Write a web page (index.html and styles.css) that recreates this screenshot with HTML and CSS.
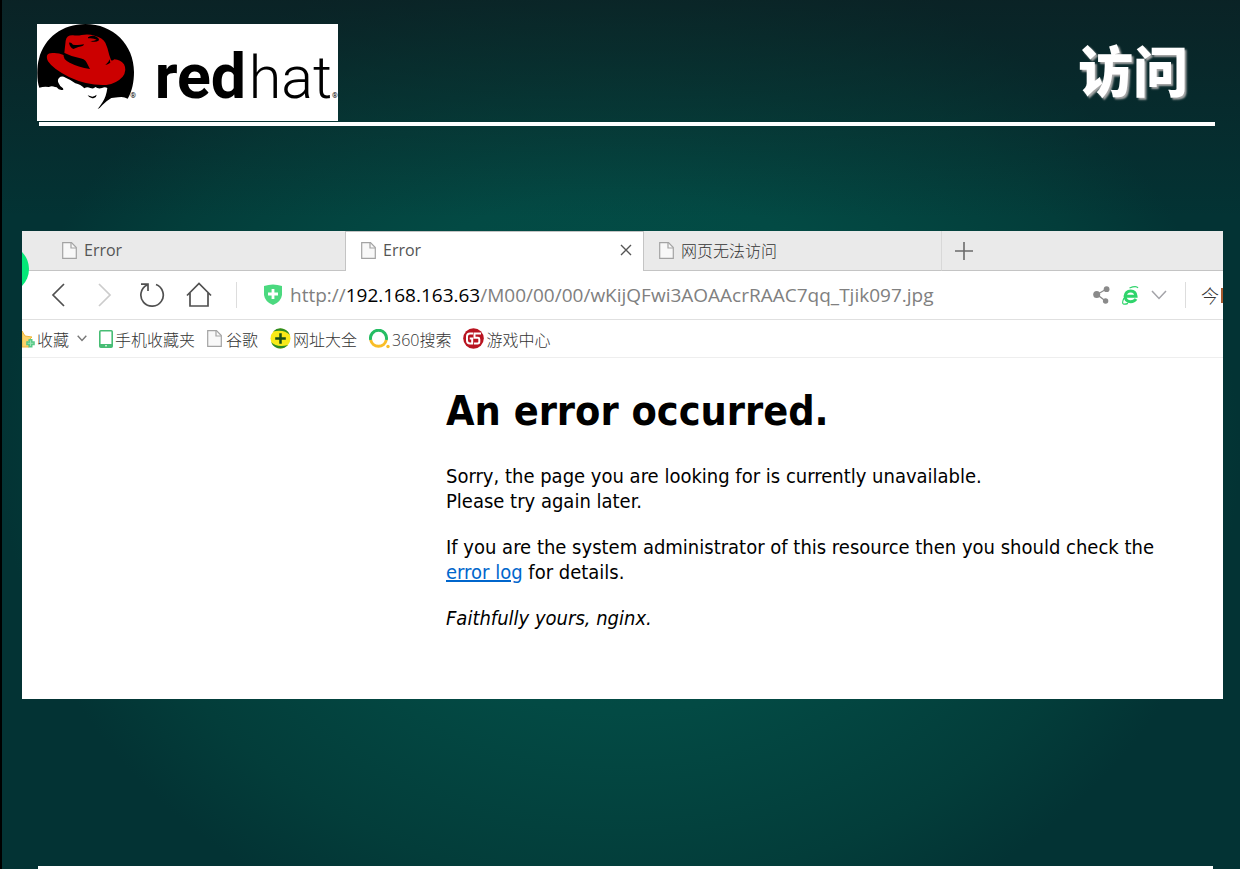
FILE: index.html
```
<!DOCTYPE html>
<html lang="zh-CN">
<head>
    <meta charset="UTF-8">
    <meta name="viewport" content="width=device-width, initial-scale=1.0">
    <title>访问</title>
    <link rel="stylesheet" href="styles.css">
</head>
<body>
<!-- shared icon shapes -->
<svg class="defs" width="0" height="0" aria-hidden="true">
    <symbol id="page" viewBox="0 0 15 17">
        <path d="M.7.7H9.5L14.3 5.5V16.3H.7Z" fill="#f8f8f8" stroke="#a3a3a3" stroke-width="1.2"/>
        <path d="M9 1V6H14" fill="none" stroke="#a3a3a3" stroke-width="1.2"/>
    </symbol>
</svg>

<header class="slide-header">
    <svg class="logo" viewBox="21 18 903 291" role="img" aria-label="redhat">
        <rect x="21" y="18" width="903" height="291" fill="#fff"/>
        <path d="M28 209C20 190 20 145 27 122C43 59 98 18 166 18C250 18 312 81 312 162C312 192 306 221 293 242Q280 234 264 238L244 240Q229 249 218 260Q209 271 203 273Q211 263 218 252Q229 235 232 210Q225 205 216 210Q205 214 196 207Q191 214 181 210Q171 205 163 211Q152 199 136 196Q120 184 107 179Q95 172 87 180Q81 187 86 196Q89 205 99 211L100 215Q87 218 80 208L75 207Q65 202 57 207Q43 204 28 209Z" fill="#000"/>
        <path d="M103 105L107 68Q110 51 129 52Q143 54 155 51Q175 47 194 53Q218 59 226 74Q233 88 238 112L243 126Q246 130 253 124Q272 126 282 139Q292 158 278 176Q260 196 229 201Q174 204 117 177Q69 153 54 130Q43 105 67 105Q83 103 103 112Z" fill="#c00"/>
        <path d="M102 104Q124 115 145 119Q164 122 169 132L180 153Q144 147 119 134Q97 123 101 108Z" fill="#000"/>
        <path d="M117 74Q123 72 129 80Q145 82 162 79Q161 85 145 87L130 93Q119 87 117 74ZM174 58Q181 52 194 54Q208 59 207 67Q197 75 181 69Q190 70 200 65Q190 59 174 61Z" fill="#000"/>
        <path d="M241 134Q233 140 226 141Q237 132 239 124Z" fill="#000"/>
        <path d="M173 232Q180 234 187 236Q194 235 200 230Q199 239 192 240Q179 243 173 232Z" fill="#000"/>
        <text class="logo-bold" x="374" y="240">red</text>
        <text class="logo-light" x="656" y="240">hat</text>
        <text class="logo-mark" x="301" y="241">®</text>
        <text class="logo-mark" x="906" y="241">®</text>
    </svg>
    <h1 class="slide-title">访问</h1>
</header>

<main class="browser">
    <nav class="tabs" aria-label="标签页">
        <span class="account"></span>
        <button class="tab tab-first" type="button"><svg class="page-icon"><use href="#page"/></svg>Error</button>
        <div class="tab tab-active">
            <svg class="page-icon"><use href="#page"/></svg>Error
            <button class="tab-close" type="button" aria-label="关闭"><svg width="12" height="12" viewBox="0 0 12 12"><path d="M1 1L11 11M11 1L1 11" fill="none" stroke="#555" stroke-width="1.4"/></svg></button>
        </div>
        <button class="tab tab-cjk" type="button"><svg class="page-icon"><use href="#page"/></svg>网页无法访问</button>
        <button class="tab-new" type="button" aria-label="新标签页"><svg width="18" height="18" viewBox="0 0 18 18"><path d="M9 0V18M0 9H18" stroke="#6b6b6b" stroke-width="1.6"/></svg></button>
    </nav>

    <div class="toolbar">
        <div class="nav-buttons">
            <button type="button" aria-label="后退"><svg width="14" height="24" viewBox="0 0 14 24"><path d="M13 1L2 12L13 23" fill="none" stroke="#505050" stroke-width="1.7"/></svg></button>
            <button type="button" aria-label="前进"><svg width="14" height="24" viewBox="0 0 14 24"><path d="M1 1L12 12L1 23" fill="none" stroke="#ccc" stroke-width="1.7"/></svg></button>
            <button type="button" aria-label="刷新"><svg width="26" height="26" viewBox="0 0 26 26"><path d="M17 2.5A11.2 11.2 0 1 1 8 3M2 2.2H9V9" fill="none" stroke="#505050" stroke-width="1.7"/></svg></button>
            <button type="button" aria-label="主页"><svg width="26" height="26" viewBox="0 0 26 26"><path d="M1 13.5L13 1.5L25 13.5M4 11V24H22V11" fill="none" stroke="#505050" stroke-width="1.7"/></svg></button>
        </div>
        <svg class="shield" width="20" height="22" viewBox="0 0 20 22"><path d="M1 2Q10-1 19 2V11Q18 18 10 21Q2 18 1 11Z" fill="#4bd97f"/><path d="M10 5V15M5 10H15" stroke="#fff" stroke-width="2.8"/></svg>
        <div class="address" role="textbox" aria-label="地址" contenteditable="true" spellcheck="false">http://<span class="host">192.168.163.63</span>/M00/00/00/wKijQFwi3AOAAcrRAAC7qq_Tjik097.jpg</div>
        <div class="tools">
            <button type="button" aria-label="分享"><svg width="17" height="18" viewBox="0 0 17 18"><path d="M13.5 3L4 8.5L12.5 15" fill="none" stroke="#8a8a8a" stroke-width="1.3"/><circle cx="3.7" cy="8.5" r="3.5" fill="#8a8a8a"/><circle cx="13.6" cy="3.2" r="2.9" fill="#8a8a8a"/><circle cx="12.6" cy="15" r="2.7" fill="#8a8a8a"/></svg></button>
            <button type="button" aria-label="浏览模式"><svg width="17" height="20" viewBox="0 0 17 20"><path d="M3.3 11.2H14Q13.6 6 8.7 6T3.1 11.3Q3.3 16.8 8.7 16.8Q12.2 16.8 14 14" fill="none" stroke="#2fd46b" stroke-width="3"/><path d="M7.5 3Q14.5.2 16 3M2 13Q-.4 18 1.4 19Q3 19.6 6 18.4" fill="none" stroke="#2fd46b" stroke-width="1.2"/></svg></button>
            <button type="button" aria-label="展开"><svg width="16" height="10" viewBox="0 0 16 10"><path d="M1 1L8 8.5L15 1" fill="none" stroke="#a3a3a8" stroke-width="1.5"/></svg></button>
        </div>
        <div class="search"><span>今</span><i class="search-mark"></i></div>
    </div>

    <nav class="bookmarks" aria-label="收藏栏">
        <a class="bookmark" href="#"><svg width="13" height="20" viewBox="0 0 13 20"><path d="M0 2L3 7L10 8L5.5 12.5L7 18H0Z" fill="#fbd46b" stroke="#eeb63d"/><path d="M8.5 10V18.5M4.2 14.3H12.8" stroke="#59c987" stroke-width="4"/><path d="M8.5 11.5V17M5.7 14.3H11.3" stroke="#9ae4b7" stroke-width="1"/></svg>收藏<svg class="caret" width="10" height="7" viewBox="0 0 10 7"><path d="M.7.8L5 5.5L9.3.8" fill="none" stroke="#777" stroke-width="1.4"/></svg></a>
        <a class="bookmark" href="#"><svg width="14" height="18" viewBox="0 0 14 18"><rect x=".8" y=".8" width="12.4" height="16.4" rx="1" fill="#fff" stroke="#47bd74" stroke-width="1.6"/><path d="M1 14H13V17H1Z" fill="#47bd74"/><path d="M6 15.8H8" stroke="#fff"/></svg>手机收藏夹</a>
        <a class="bookmark google" href="#"><svg class="page-icon"><use href="#page"/></svg>谷歌</a>
        <a class="bookmark" href="#"><svg width="21" height="21" viewBox="0 0 21 21"><circle cx="10.5" cy="10.5" r="10" fill="#f8ea18"/><path d="M3 3.5Q9-2 16 2Q19 4 20 7Q14 1 3 3.5ZM18 17Q12 23 5 19Q2 17 1 14Q7 20 18 17Z" fill="#2c8b24"/><path d="M10.5 5.2V15.8M5.2 10.5H15.8" stroke="#174d17" stroke-width="2.5"/></svg>网址大全</a>
        <a class="bookmark" href="#"><svg width="21" height="20" viewBox="0 0 21 20"><path d="M1.7 11A8 8 0 1 1 17.3 11" fill="none" stroke="#25bd63" stroke-width="3"/><path d="M1.7 11A8 8 0 0 0 17.3 11" fill="none" stroke="#f9bd27" stroke-width="3"/><circle cx="19" cy="17.5" r="1.7" fill="#f9bd27"/></svg>360搜索</a>
        <a class="bookmark" href="#"><svg width="21" height="21" viewBox="0 0 21 21"><circle cx="10.5" cy="10.5" r="10.3" fill="#b91420"/><path d="M10 5.5H7Q4 5.5 4 8.5V12.5Q4 15.5 7 15.5H9.2V10.5H6.7M18 5.5H11.5V9.8H15Q16.3 9.8 16.3 11.2V13.8Q16.3 15.5 14.7 15.5H11" fill="none" stroke="#fff" stroke-width="2"/></svg>游戏中心</a>
    </nav>

    <article class="content">
        <h2>An error occurred.</h2>
        <p>Sorry, the page you are looking for is currently unavailable.<br>Please try again later.</p>
        <p>If you are the system administrator of this resource then you should check the <a href="#">error log</a> for details.</p>
        <p><em>Faithfully yours, nginx.</em></p>
    </article>
</main>

<footer class="slide-footer"></footer>
</body>
</html>
```
FILE: styles.css
```
* {
    box-sizing: border-box;
}

body {
    margin: 0;
    min-height: 100vh;
    display: flex;
    flex-direction: column;
    border-left: 2px solid #000;
    padding: 24px 17px 0 20px;
    font-family: "Open Sans", "Noto Sans CJK SC", sans-serif;
    background:
        linear-gradient(rgba(14, 26, 30, 0.65), rgba(14, 26, 30, 0) 25%),
        radial-gradient(ellipse 50% 60% at 50% 52%, #005048 0%, #034a44 50%, #033d3a 83%, #033334 100%);
}

button {
    display: flex;
    align-items: center;
    padding: 0;
    border: none;
    background: none;
    font: inherit;
    color: inherit;
    cursor: pointer;
}

svg {
    display: block;
    flex-shrink: 0;
}

.defs {
    position: absolute;
}

.slide-header {
    display: flex;
    justify-content: space-between;
    align-items: flex-start;
    margin: 0 8px 0 17px;
    padding-bottom: 1px;
    border-bottom: 4px solid #fff;
}

.logo {
    width: 301px;
    height: 97px;
    margin-left: -2px;
}

.logo-bold,
.logo-light {
    font-family: Roboto, sans-serif;
    font-size: 188px;
    font-weight: 700;
}

.logo-light {
    font-size: 178px;
    font-weight: 300;
}

.logo-mark {
    font-family: Roboto, sans-serif;
    font-size: 22px;
}

.slide-title {
    margin: 4px 27px 0 0;
    font-family: "Noto Sans CJK SC", sans-serif;
    font-size: 55px;
    line-height: 80px;
    font-weight: 900;
    color: #fff;
    text-shadow: 2px 2px 2px #aaa;
}

.browser {
    margin-top: 105px;
    background: #fff;
    overflow: hidden;
}

/* tab strip */
.tabs {
    position: relative;
    z-index: 1;
    display: flex;
    height: 40px;
    background: #eaeaea;
    color: #555;
    font-size: 16px;
}

.tab {
    display: flex;
    align-items: center;
    flex: 0 0 298px;
    gap: 7px;
    padding: 0 11px 1px 15px;
    border-bottom: 1px solid #c4c4c4;
}

.tab-first {
    flex-basis: 323px;
    padding-left: 40px;
}

.tab-active {
    flex-basis: 299px;
    border: 1px solid #c4c4c4;
    border-bottom: none;
    padding-bottom: 3px;
    background: #fff;
}

.tab-close {
    margin-left: auto;
}

.tab-cjk {
    border-right: 1px solid #d8d8d8;
    font-weight: 300;
    color: #333;
}

.tab-new {
    flex: 1;
    padding-left: 13px;
    border-bottom: 1px solid #c4c4c4;
}

.page-icon {
    width: 15px;
    height: 17px;
}

/* account avatar, mostly hidden past the window edge */
.account {
    position: absolute;
    top: 14px;
    left: -41px;
    width: 48px;
    height: 48px;
    border-radius: 50%;
    background: #04e878;
}

/* address row */
.toolbar {
    display: flex;
    align-items: center;
    height: 49px;
    border-bottom: 1px solid #e0e0e0;
}

.nav-buttons {
    display: flex;
    width: 215px;
    height: 26px;
    padding-left: 12px;
    border-right: 1px solid #ddd;
}

.nav-buttons button {
    justify-content: center;
    width: 47px;
}

.shield {
    margin: 0 7px 0 26px;
}

.address {
    flex: 1;
    font-size: 19px;
    line-height: 26px;
    color: #808080;
    white-space: nowrap;
    outline: none;
}

.host {
    color: #000;
}

.tools {
    display: flex;
    align-items: center;
    gap: 12px;
    padding-right: 18px;
}

.search {
    display: flex;
    align-items: center;
    width: 38px;
    height: 26px;
    padding-left: 15px;
    border-left: 1px solid #ddd;
    font-size: 18px;
    font-weight: 300;
    color: #333;
    overflow: hidden;
}

.search-mark {
    width: 2px;
    height: 15px;
    margin-left: 2px;
    flex-shrink: 0;
    background: #a65a2e;
}

/* bookmarks */
.bookmarks {
    display: flex;
    align-items: center;
    gap: 12px;
    height: 38px;
    border-bottom: 1px solid #eee;
    font-size: 16px;
    font-weight: 300;
}

.bookmark {
    display: flex;
    align-items: center;
    gap: 2px;
    color: #333;
    text-decoration: none;
    white-space: nowrap;
}

.caret {
    margin-left: 6px;
}

.google {
    gap: 4px;
}

/* error page */
.content {
    min-height: 341px;
    padding: 29px 40px 40px 424px;
    font-family: Tahoma, "DejaVu Sans Condensed", sans-serif;
    font-size: 20px;
    line-height: 25px;
    color: #000;
}

.content h2 {
    margin: 0 0 28px;
    font-size: 41px;
    line-height: 49px;
}

.content p {
    margin: 0 0 21px;
}

.content a {
    color: #0066cc;
}

.slide-footer {
    height: 3px;
    margin: auto 10px 0 16px;
    background: #fff;
}
```
